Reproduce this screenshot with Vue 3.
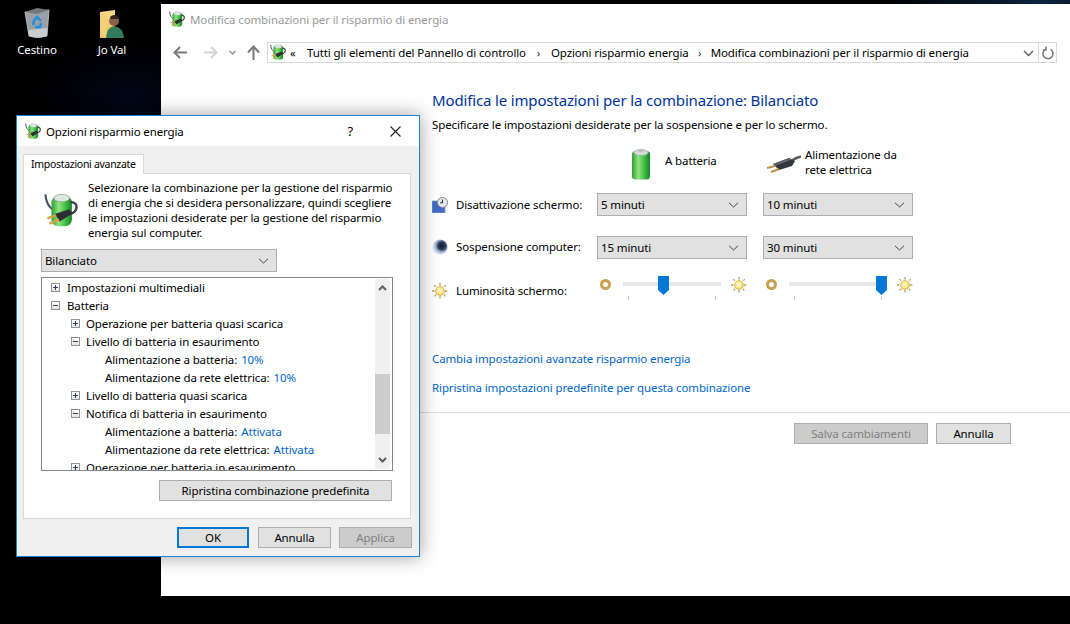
<script setup>
const treeRows = [
  { level: 0, box: 'plus', text: 'Impostazioni multimediali' },
  { level: 0, box: 'minus', text: 'Batteria' },
  { level: 1, box: 'plus', text: 'Operazione per batteria quasi scarica' },
  { level: 1, box: 'minus', text: 'Livello di batteria in esaurimento' },
  { level: 2, text: 'Alimentazione a batteria:', value: '10%' },
  { level: 2, text: 'Alimentazione da rete elettrica:', value: '10%' },
  { level: 1, box: 'plus', text: 'Livello di batteria quasi scarica' },
  { level: 1, box: 'minus', text: 'Notifica di batteria in esaurimento' },
  { level: 2, text: 'Alimentazione a batteria:', value: 'Attivata' },
  { level: 2, text: 'Alimentazione da rete elettrica:', value: 'Attivata' },
  { level: 1, box: 'plus', text: 'Operazione per batteria in esaurimento' }
]
</script>

<template>
  <div class="desktop">
    <svg class="defs" width="0" height="0">
      <defs>
        <linearGradient id="gBat" x1="0" x2="1" y1="0" y2="0">
          <stop offset="0" stop-color="#2f9e36" />
          <stop offset=".35" stop-color="#8fe47e" />
          <stop offset=".7" stop-color="#3fbb45" />
          <stop offset="1" stop-color="#18802a" />
        </linearGradient>
        <linearGradient id="gFolder" x1="0" x2="0" y1="0" y2="1">
          <stop offset="0" stop-color="#f6d98a" />
          <stop offset="1" stop-color="#eec25a" />
        </linearGradient>
        <radialGradient id="gSun" cx=".45" cy=".45" r=".6">
          <stop offset="0" stop-color="#fffbe0" />
          <stop offset=".6" stop-color="#fbe88a" />
          <stop offset="1" stop-color="#e3b840" />
        </radialGradient>
        <radialGradient id="gMoon" cx=".62" cy=".42" r=".7">
          <stop offset="0" stop-color="#111a2e" />
          <stop offset=".35" stop-color="#2c3b5c" />
          <stop offset=".6" stop-color="#a9bbd8" />
          <stop offset=".85" stop-color="#dfe7f2" />
        </radialGradient>
        <symbol id="power" viewBox="0 0 100 100">
          <path d="M4 4C6 28 14 42 28 50" fill="none" stroke="#46506a" stroke-width="6" />
          <rect x="22" y="8" width="60" height="90" rx="20" fill="url(#gBat)" />
          <ellipse cx="52" cy="15" rx="23" ry="11" fill="#dfe8df" stroke="#7f9f86" stroke-width="2" />
          <path d="M78 26C102 28 102 54 76 62" fill="none" stroke="#3b4048" stroke-width="7" />
          <path d="M32 62L74 48L84 60L46 84Z" fill="#2a2d32" />
          <path d="M36 66L10 74M44 78L16 90" stroke="#d2a24a" stroke-width="7" />
        </symbol>
        <symbol id="sun" viewBox="0 0 16 16">
          <path d="M8 0V3M8 13V16M0 8H3M13 8H16M2.2 2.2L4.2 4.2M11.8 11.8L13.8 13.8M13.8 2.2L11.8 4.2M4.2 11.8L2.2 13.8" stroke="#b8a060" stroke-width="1.3" stroke-dasharray="2 .6" />
          <circle cx="8" cy="8" r="4.4" fill="url(#gSun)" stroke="#d8b548" stroke-width=".8" />
        </symbol>
      </defs>
    </svg>

    <div class="desk-icon icon-bin">
      <svg width="28" height="30" viewBox="0 0 28 30">
        <path d="M2 4L26 2L24 28Q14 31 6 28Z" fill="#9aa1a6" stroke="#c8ced2" stroke-width=".8" />
        <path d="M2 4L14 0L26 2L14 6Z" fill="#70787e" />
        <path d="M5 22L24 20L24 28Q14 31 6 28Z" fill="#c9cdd0" />
        <path d="M10 14L14 9L18 13M18 15L17 19H12M10 17L11 14" fill="none" stroke="#1c8fe0" stroke-width="2.4" />
      </svg>
      <span>Cestino</span>
    </div>
    <div class="desk-icon icon-user">
      <svg width="26" height="29" viewBox="0 0 26 29">
        <path d="M1 2L16 0V24L7 28H1Z" fill="url(#gFolder)" />
        <path d="M1 2L7 6V28L1 24Z" fill="#f2d078" />
        <circle cx="15" cy="11" r="5" fill="#8a6046" />
        <path d="M11 7Q15 3 20 7L19 9H12Z" fill="#2d2622" />
        <path d="M7 28Q8 17 15 16Q24 17 25 28Z" fill="#2f7b5c" />
      </svg>
      <span>Jo Val</span>
    </div>

    <section class="window main-window">
      <header class="main-title">
        <svg class="i16"><use href="#power" /></svg>
        <span>Modifica combinazioni per il risparmio di energia</span>
      </header>
      <nav class="nav">
        <svg class="nav-arrow" width="15" height="13" viewBox="0 0 15 13"><path d="M14 6.5H2M7 1L1.5 6.5L7 12" fill="none" stroke="#7a7a7a" stroke-width="2" /></svg>
        <svg class="nav-arrow fwd" width="15" height="13" viewBox="0 0 15 13"><path d="M1 6.5H13M8 1L13.5 6.5L8 12" fill="none" stroke="#d6d6d6" stroke-width="2" /></svg>
        <svg class="nav-down" width="7" height="5" viewBox="0 0 7 5"><path d="M.5 1L3.5 4L6.5 1" fill="none" stroke="#9a9a9a" stroke-width="1.5" /></svg>
        <svg class="nav-arrow up" width="13" height="15" viewBox="0 0 13 15"><path d="M6.5 15V2M1 7.5L6.5 1.5L12 7.5" fill="none" stroke="#7a7a7a" stroke-width="2" /></svg>
        <div class="address">
          <svg class="i16"><use href="#power" /></svg>
          <span class="crumb-back">«</span>
          <span class="crumb">Tutti gli elementi del Pannello di controllo</span>
          <span class="sep">›</span>
          <span class="crumb">Opzioni risparmio energia</span>
          <span class="sep sep2">›</span>
          <span class="crumb">Modifica combinazioni per il risparmio di energia</span>
          <svg class="addr-chev" width="11" height="7" viewBox="0 0 11 7"><path d="M1 1L5.5 5.5L10 1" fill="none" stroke="#5f5f5f" stroke-width="1.4" /></svg>
        </div>
        <div class="refresh">
          <svg width="12" height="14" viewBox="0 0 12 14"><path d="M3.6 3.2A5 5 0 1 0 8.6 3.4M4 .6V4H.8" fill="none" stroke="#777" stroke-width="1.5" /></svg>
        </div>
      </nav>

      <div class="content">
        <h1>Modifica le impostazioni per la combinazione: Bilanciato</h1>
        <p class="sub">Specificare le impostazioni desiderate per la sospensione e per lo schermo.</p>

        <div class="plan-grid">
          <div class="head-spacer"></div>
          <div class="col-head bat-head">
            <svg width="20" height="31" viewBox="0 0 20 31">
              <rect x="1" y="2" width="18" height="28.5" rx="3.5" fill="url(#gBat)" />
              <ellipse cx="10" cy="3.6" rx="7" ry="3" fill="#d4dcd6" stroke="#8fa596" stroke-width=".6" />
              <rect x="7.5" y="0" width="5" height="3" rx="1" fill="#b8c4bc" />
            </svg>
            <span>A batteria</span>
          </div>
          <div class="col-head ac-head">
            <svg width="34" height="18" viewBox="0 0 34 18">
              <path d="M24 6C27 4 30 2.500 34 1.500" fill="none" stroke="#555b62" stroke-width="2.400" />
              <path d="M6 9L22 3L28 6L25 11L12 15Z" fill="#33363b" />
              <path d="M6 9L22 3L25 4.500L9 10.500Z" fill="#62666c" />
              <path d="M8 11L0 13M12 14L4 17" stroke="#b98f3e" stroke-width="2" />
            </svg>
            <span>Alimentazione da<br />rete elettrica</span>
          </div>

          <div class="row-label screen-label">
            <svg width="16" height="16" viewBox="0 0 16 16">
              <rect x="0" y="4" width="13" height="12" fill="#3f6cc4" stroke="#8ca0c8" stroke-width=".8" />
              <circle cx="10.500" cy="5.500" r="5" fill="#e8ebef" stroke="#7b8494" stroke-width="1" />
              <path d="M10.500 2.500V5.800H8" fill="none" stroke="#303a52" stroke-width="1.100" />
            </svg>
            <span>Disattivazione schermo:</span>
          </div>
          <div class="select wide"><span>5 minuti</span><svg class="chev" viewBox="0 0 11 6"><path d="M1 .8L5.5 5L10 .8" /></svg></div>
          <div class="select wide"><span>10 minuti</span><svg class="chev" viewBox="0 0 11 6"><path d="M1 .8L5.5 5L10 .8" /></svg></div>

          <div class="row-label">
            <svg width="16" height="16" viewBox="0 0 16 16"><circle cx="8" cy="8" r="7.600" fill="url(#gMoon)" /></svg>
            <span>Sospensione computer:</span>
          </div>
          <div class="select wide"><span>15 minuti</span><svg class="chev" viewBox="0 0 11 6"><path d="M1 .8L5.5 5L10 .8" /></svg></div>
          <div class="select wide"><span>30 minuti</span><svg class="chev" viewBox="0 0 11 6"><path d="M1 .8L5.5 5L10 .8" /></svg></div>

          <div class="row-label bright-label">
            <svg width="16" height="16"><use href="#sun" /></svg>
            <span>Luminosità schermo:</span>
          </div>
          <div class="bright">
            <span class="ring"></span>
            <div class="slider">
              <div class="track"></div>
              <svg class="thumb thumb-a" width="11" height="19" viewBox="0 0 11 19"><path d="M0 0H11V14L5.5 19L0 14Z" fill="#0078d7" /></svg>
              <div class="ticks"><i></i><i></i></div>
            </div>
            <svg width="16" height="16"><use href="#sun" /></svg>
          </div>
          <div class="bright">
            <span class="ring"></span>
            <div class="slider">
              <div class="track"></div>
              <svg class="thumb thumb-b" width="11" height="19" viewBox="0 0 11 19"><path d="M0 0H11V14L5.5 19L0 14Z" fill="#0078d7" /></svg>
              <div class="ticks"><i></i><i></i></div>
            </div>
            <svg width="16" height="16"><use href="#sun" /></svg>
          </div>
        </div>

        <a class="link first">Cambia impostazioni avanzate risparmio energia</a>
        <a class="link second">Ripristina impostazioni predefinite per questa combinazione</a>
      </div>

      <div class="footer">
        <button class="btn disabled save">Salva cambiamenti</button>
        <button class="btn cancel">Annulla</button>
      </div>
    </section>

    <section class="window dialog">
      <header class="dlg-title">
        <svg class="i16"><use href="#power" /></svg>
        <span class="dlg-name">Opzioni risparmio energia</span>
        <span class="help">?</span>
        <svg class="close" width="11" height="11" viewBox="0 0 11 11"><path d="M.5 .5L10.5 10.5M10.5 .5L.5 10.5" stroke="#222" stroke-width="1.100" /></svg>
      </header>
      <div class="dlg-body">
        <div class="tab">Impostazioni avanzate</div>
        <div class="panel">
          <div class="intro">
            <svg class="big-power"><use href="#power" /></svg>
            <p>Selezionare la combinazione per la gestione del risparmio di energia che si desidera personalizzare, quindi scegliere le impostazioni desiderate per la gestione del risparmio energia sul computer.</p>
          </div>
          <div class="select plan"><span>Bilanciato</span><svg class="chev" viewBox="0 0 11 6"><path d="M1 .8L5.5 5L10 .8" /></svg></div>
          <div class="tree">
            <div class="tree-rows">
              <div v-for="(row, i) in treeRows" :key="i" class="tree-row" :class="'lv' + row.level">
                <span v-if="row.box" class="box"><i></i><b v-if="row.box === 'plus'"></b></span>
                <span class="t">{{ row.text }}</span>
                <span v-if="row.value" class="val">{{ row.value }}</span>
              </div>
            </div>
            <div class="scrollbar">
              <svg width="9" height="6" viewBox="0 0 9 6"><path d="M1 5L4.5 1.5L8 5" fill="none" stroke="#606060" stroke-width="2" /></svg>
              <div class="sb-space"><div class="sb-thumb"></div></div>
              <svg width="9" height="6" viewBox="0 0 9 6"><path d="M1 1L4.5 4.5L8 1" fill="none" stroke="#606060" stroke-width="2" /></svg>
            </div>
          </div>
          <div class="restore-row"><button class="btn restore">Ripristina combinazione predefinita</button></div>
        </div>
        <div class="dlg-actions">
          <button class="btn ok">OK</button>
          <button class="btn">Annulla</button>
          <button class="btn disabled">Applica</button>
        </div>
      </div>
    </section>
  </div>
</template>

<style>
html, body { margin: 0; background: #000; }
</style>

<style scoped>
.desktop {
  position: relative;
  width: 1070px;
  height: 624px;
  overflow: hidden;
  background: radial-gradient(ellipse 160px 30px at 1040px 0, #0d2440, transparent), radial-gradient(ellipse 100px 60px at 130px 100px, #020617, transparent), #000;
  font-family: "Noto Sans", "Open Sans", sans-serif;
  font-size: 11.5px;
  letter-spacing: -0.12px;
  color: #000;
  line-height: 15px;
}
.defs { position: absolute; }
.i16 { width: 16px; height: 16px; flex: none; }
.desk-icon {
  position: absolute;
  display: flex;
  flex-direction: column;
  align-items: center;
  color: #fff;
  width: 70px;
}
.desk-icon span { margin-top: 4px; }
.icon-bin { left: 2px; top: 8px; }
.icon-user { left: 77px; top: 10px; }
.icon-user span { margin-top: 3px; }

.window { position: absolute; box-sizing: border-box; }
.main-window {
  left: 161px;
  top: 4px;
  width: 909px;
  height: 592px;
  background: #fff;
  display: flex;
  flex-direction: column;
}
.main-title {
  display: flex;
  align-items: center;
  gap: 5px;
  height: 31px;
  padding-left: 8px;
  color: #9a9a9a;
  padding-bottom: 1px;
  box-sizing: border-box;
}
.nav {
  display: flex;
  align-items: center;
  height: 21px;
  margin-top: 7px;
  padding-left: 12px;
}
.nav-arrow { flex: none; }
.fwd { margin-left: 15px; }
.nav-down { margin-left: 11px; }
.up { margin-left: 11px; }
.address {
  margin-left: 7px;
  width: 772px;
  height: 21px;
  box-sizing: border-box;
  border: 1px solid #d9d9d9;
  display: flex;
  align-items: center;
  padding-left: 2px;
  padding-bottom: 1px;
  position: relative;
  white-space: nowrap;
}
.crumb-back { margin-left: 4px; width: 17px; font-size: 11px; }
.sep { width: 15px; text-align: center; margin: 0 5px; color: #333; }
.sep2 { margin: 0 3.5px; }
.addr-chev { position: absolute; right: 4px; top: 7px; }
.refresh {
  width: 18px;
  height: 21px;
  box-sizing: border-box;
  border: 1px solid #d9d9d9;
  border-left: none;
  display: flex;
  align-items: center;
  justify-content: center;
}
.content {
  padding: 27px 0 0 271px;
  display: flex;
  flex-direction: column;
  align-items: flex-start;
}
h1 {
  margin: 0;
  font-size: 15px;
  letter-spacing: -0.15px;
  font-weight: 400;
  color: #003399;
  line-height: 20px;
}
.sub { margin: 7px 0 0; }
.plan-grid {
  display: grid;
  grid-template-columns: 149px 150px 150px;
  column-gap: 16px;
  grid-template-rows: 54px 43px 39px 30px;
  margin-top: 7px;
}
.col-head { display: flex; align-items: flex-start; padding-top: 10px; box-sizing: border-box; }
.bat-head { padding-left: 34px; }
.bat-head svg { flex: none; }
.bat-head span { margin: 4px 0 0 14px; }
.ac-head { padding-left: 4px; }
.ac-head svg { flex: none; margin-top: 6px; }
.ac-head span { margin: -2px 0 0 4px; }
.row-label {
  display: flex;
  align-items: flex-start;
  gap: 8px;
  padding-top: 3px;
  white-space: nowrap;
}
.row-label svg { flex: none; }
.screen-label { padding-top: 4px; }
.bright-label { padding-top: 8px; }
.select {
  box-sizing: border-box;
  height: 23px;
  background: #e1e1e1;
  border: 1px solid #adadad;
  display: flex;
  align-items: center;
  justify-content: space-between;
  padding: 0 7px 0 3px;
}
.chev { width: 11px; height: 6px; flex: none; }
.chev path { fill: none; stroke: #444; stroke-width: 1; }
.bright { display: flex; align-items: flex-start; height: 30px; margin-left: 3px; margin-top: 1px; margin-right: -2px; }
.bright > svg { flex: none; margin-top: 1px; margin-left: 10px; }
.ring {
  flex: none;
  width: 5px;
  height: 5px;
  border: 3px solid #c9a050;
  border-radius: 50%;
  background: #fff;
  margin-top: 3px;
}
.slider { position: relative; width: 98px; height: 25px; margin-left: 12px; flex: none; }
.track {
  position: absolute;
  left: 0;
  right: 0;
  top: 6px;
  height: 4px;
  background: #e7e7e7;
}
.thumb { position: absolute; top: 0; }
.thumb-a { left: 35px; }
.thumb-b { left: 87px; }
.ticks {
  position: absolute;
  left: 5px;
  width: 88px;
  top: 20px;
  display: flex;
  justify-content: space-between;
}
.ticks i { width: 1px; height: 4px; background: #c4c4c4; }
.link { color: #0066cc; }
.first { margin-top: 46px; }
.second { margin-top: 14px; }
.footer {
  margin-top: 17px;
  border-top: 1px solid #dcdcdc;
  margin-left: 259px;
  padding: 10px 59px 0 0;
  display: flex;
  justify-content: flex-end;
  gap: 8px;
}
.btn {
  box-sizing: border-box;
  width: 74px;
  height: 21px;
  background: #e1e1e1;
  border: 1px solid #adadad;
  font: inherit;
  letter-spacing: inherit;
  padding: 0;
  color: #000;
}
.btn.disabled { background: #cccccc; color: #808080; }
.save { width: 134px; }
.cancel { width: 75px; }

.dialog {
  left: 16px;
  top: 115px;
  width: 404px;
  height: 442px;
  background: #f0f0f0;
  border: 1px solid #1883d7;
  box-shadow: 0 0 18px rgba(0, 0, 0, 0.38);
  display: flex;
  flex-direction: column;
}
.dlg-title {
  display: flex;
  align-items: center;
  height: 30px;
  background: #fff;
  padding: 0 18px 0 8px;
}
.dlg-name { margin-left: 5px; flex: 1; }
.help { margin-right: 37px; font-size: 13px; }
.dlg-body { flex: 1; padding: 8px 7px 0 6px; display: flex; flex-direction: column; }
.tab {
  box-sizing: border-box;
  width: 121px;
  height: 20px;
  background: #fff;
  border: 1px solid #d9d9d9;
  border-bottom: none;
  padding: 2px 0 0 7px;
  position: relative;
  z-index: 1;
  font-size: 10.5px;
  letter-spacing: -0.3px;
  white-space: nowrap;
}
.panel {
  box-sizing: border-box;
  width: 388px;
  height: 346px;
  margin-top: -1px;
  background: #fff;
  border: 1px solid #d9d9d9;
  padding: 6px 18px 0 17px;
}
.intro { display: flex; align-items: flex-start; }
.big-power { width: 34px; height: 34px; flex: none; margin: 13px 0 0 3px; }
.intro p { margin: 0 0 0 10px; width: 312px; flex: none; }
.plan { width: 236px; margin-top: 9px; }
.tree {
  margin-top: 5px;
  box-sizing: border-box;
  width: 352px;
  height: 194px;
  border: 1px solid #828790;
  display: flex;
  overflow: hidden;
  position: relative;
}
.tree-rows { flex: 1; overflow: hidden; }
.tree-row {
  height: 18px;
  display: flex;
  align-items: center;
  white-space: nowrap;
  position: relative;
}
.lv0 { padding-left: 25px; }
.lv1 { padding-left: 44px; }
.lv2 { padding-left: 63px; }
.val { color: #0066cc; margin-left: 4px; }
.box {
  position: absolute;
  width: 9px;
  height: 9px;
  box-sizing: border-box;
  border: 1px solid #939393;
  background: linear-gradient(#fff, #e6e6e6);
  top: 5px;
}
.lv0 .box { left: 9px; }
.lv1 .box { left: 29px; }
.box i { position: absolute; left: 1px; top: 3px; width: 5px; height: 1px; background: #2e3a60; }
.box b { position: absolute; left: 3px; top: 1px; width: 1px; height: 5px; background: #2e3a60; }
.scrollbar {
  flex: none;
  width: 15px;
  margin: 1px 2px 1px 0;
  background: #f0f0f0;
  display: flex;
  flex-direction: column;
  align-items: center;
  padding: 6px 0;
  box-sizing: border-box;
}
.sb-space { flex: 1; width: 100%; margin: 6px 0; position: relative; }
.sb-thumb { position: absolute; left: 0; right: 0; top: 77px; height: 60px; background: #cdcdcd; }
.restore-row { display: flex; justify-content: flex-end; margin-top: 9px; width: 351px; }
.restore { width: 233px; }
.dlg-actions { display: flex; justify-content: flex-end; gap: 8px; margin-top: 8px; }
.dlg-actions .btn { width: 73px; }
.dlg-actions .ok { width: 72px; border: 2px solid #0078d7; margin-right: 1px; }
</style>
